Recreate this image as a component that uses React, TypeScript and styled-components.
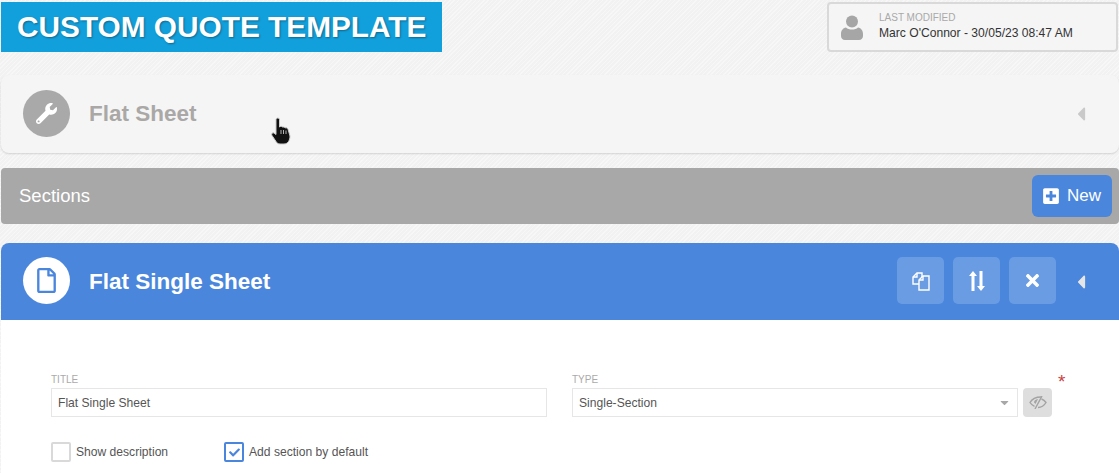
import React from "react";
import styled, { createGlobalStyle } from "styled-components";
import { FaCaretDown, FaCaretLeft, FaCheck, FaPlusSquare, FaRegFile, FaTimes, FaWrench } from "react-icons/fa";

const GlobalStyle = createGlobalStyle`
  html, body {
    margin: 0;
    padding: 0;
    height: 100%;
    overflow: hidden;
  }
  body {
    font-family: "Liberation Sans", Arial, sans-serif;
    background-color: #f4f4f4;
    background-image: repeating-linear-gradient(135deg, #f7f7f7 0 1px, #f2f2f2 1px 3px);
  }
`;

const Page = styled.div`
  position: relative;
  width: 1119px;
  height: 473px;
  overflow: hidden;
`;

const TopRow = styled.header`
  display: flex;
  justify-content: space-between;
  padding: 2px 1px 0 1px;
  height: 50px;
  margin-bottom: 23px;
`;

const Banner = styled.h1`
  margin: 0;
  width: 441px;
  height: 50px;
  box-sizing: border-box;
  background: #11a0dc;
  color: #fff;
  font-size: 29.8px;
  line-height: 49px;
  font-weight: 700;
  white-space: nowrap;
  padding-left: 16px;
  text-shadow: 1px 1px 2px rgba(0, 0, 0, 0.35);
`;

const ModifiedCard = styled.div`
  display: flex;
  align-items: center;
  width: 291px;
  height: 50px;
  box-sizing: border-box;
  border: 2px solid #d9d9d9;
  border-radius: 4px;
  background: #f5f5f5;
  padding-left: 12px;
`;

const ModifiedIcon = styled.svg`
  margin-right: 16px;
`;

const ModifiedLabel = styled.div`
  font-size: 10px;
  line-height: 12px;
  color: #a9a9a9;
`;

const ModifiedValue = styled.div`
  font-size: 12.1px;
  line-height: 17px;
  color: #333;
  margin-top: 1px;
`;

const Panel = styled.section<{ $blue?: boolean }>`
  display: flex;
  align-items: center;
  height: ${(p) => (p.$blue ? 77 : 78)}px;
  margin: 0 0 ${(p) => (p.$blue ? 0 : 15)}px 1px;
  box-sizing: border-box;
  padding: 0 27px 0 22px;
  background: ${(p) => (p.$blue ? "#4a86dc" : "#f5f5f5")};
  border-radius: ${(p) => (p.$blue ? "8px 8px 0 0" : "8px")};
  box-shadow: ${(p) => (p.$blue ? "none" : "0 1px 2px rgba(0,0,0,.14)")};
`;

const Disc = styled.div<{ $blue?: boolean }>`
  display: flex;
  align-items: center;
  justify-content: center;
  width: 47px;
  height: 47px;
  margin-top: -2px;
  border-radius: 50%;
  font-size: ${(p) => (p.$blue ? 25 : 21)}px;
  background: ${(p) => (p.$blue ? "#fff" : "#a9a9a9")};
  color: ${(p) => (p.$blue ? "#4a86dc" : "#fff")};
`;

const PanelTitle = styled.h2<{ $blue?: boolean }>`
  flex: 1;
  margin: 0 0 0 19px;
  font-size: 22.5px;
  font-weight: 700;
  color: ${(p) => (p.$blue ? "#fff" : "#aaa8a6")};
`;

const Caret = styled.div<{ $blue?: boolean }>`
  display: flex;
  font-size: 22px;
  margin-left: 14px;
  color: ${(p) => (p.$blue ? "#e6e6e6" : "#c9c9c9")};
`;

const SectionsBar = styled.div`
  display: flex;
  align-items: center;
  justify-content: space-between;
  height: 56px;
  margin: 0 0 19px 1px;
  box-sizing: border-box;
  padding: 0 7px 0 18px;
  background: #a8a8a8;
  border-radius: 4px;
  color: #fff;
  font-size: 18.5px;
`;

const NewButton = styled.button`
  display: flex;
  align-items: center;
  gap: 7px;
  width: 80px;
  height: 42px;
  padding: 0 0 0 10px;
  border: none;
  border-radius: 6px;
  background: #4a86dc;
  color: #fff;
  font-family: inherit;
  font-size: 17px;
  svg {
    font-size: 18px;
  }
`;

const ActionGroup = styled.div`
  display: flex;
  gap: 9px;
  margin-top: -2px;
`;

const ActionButton = styled.button`
  display: flex;
  align-items: center;
  justify-content: center;
  width: 47px;
  height: 47px;
  padding: 0;
  border: none;
  border-radius: 5px;
  background: #6a9ce4;
  color: #fff;
  font-size: 19px;
`;

const FormPanel = styled.div`
  margin-left: 1px;
  height: 153px;
  box-sizing: border-box;
  padding: 54px 0 0 50px;
  background: #fff;
`;

const FieldRow = styled.div`
  display: flex;
  align-items: flex-end;
`;

const Field = styled.label<{ $width: number }>`
  display: block;
  width: ${(p) => p.$width}px;
  margin-right: 25px;
`;

const FieldLabel = styled.div`
  font-size: 10px;
  line-height: 11px;
  margin-bottom: 3px;
  color: #aaa;
`;

const TextInput = styled.div`
  display: flex;
  align-items: center;
  justify-content: space-between;
  height: 29px;
  box-sizing: border-box;
  padding: 0 6px;
  border: 1px solid #e6e6e6;
  font-size: 12.1px;
  color: #555;
  background: #fff;
  svg {
    color: #a8a8a8;
    font-size: 13px;
  }
`;

const EyeButton = styled.button`
  display: flex;
  align-items: center;
  justify-content: center;
  width: 29px;
  height: 29px;
  margin-left: -20px;
  padding: 0;
  border: none;
  border-radius: 4px;
  background: #dedede;
`;

const Required = styled.span`
  align-self: flex-start;
  margin: 2px 0 0 6px;
  color: #c9413f;
  font-size: 19px;
  line-height: 12px;
`;

const CheckRow = styled.div`
  display: flex;
  margin-top: 25px;
`;

const CheckItem = styled.div<{ $width: number }>`
  display: flex;
  align-items: center;
  gap: 5px;
  width: ${(p) => p.$width}px;
  font-size: 12.1px;
  color: #555;
`;

const CheckBox = styled.span<{ $on?: boolean }>`
  display: flex;
  align-items: center;
  justify-content: center;
  width: 20px;
  height: 20px;
  box-sizing: border-box;
  border: 2.500px solid ${(p) => (p.$on ? "#4a86dc" : "#d9d9d9")};
  border-radius: 2px;
  color: #4a86dc;
  font-size: 11px;
`;

const Cursor = styled.svg`
  position: absolute;
  left: 271px;
  top: 117px;
`;

function UserIcon() {
  return (
    <ModifiedIcon width="22" height="25" viewBox="0 0 22 25" fill="#a6a6a6">
      <circle cx="11" cy="6.500" r="6" />
      <path d="M5 12.500c1.500 1.500 3.500 2 6 2s4.500-.500 6-2c3 .500 5 3 5 6.500v2c0 2-1.500 4-4 4H4c-2.500 0-4-2-4-4v-2c0-3.500 2-6 5-6.500z" />
    </ModifiedIcon>
  );
}

function CopyIcon() {
  return (
    <svg width="20" height="20" viewBox="0 0 20 20" fill="none" stroke="#fff" strokeWidth="1.4">
      <path d="M8 13H2V6l4-4h5v4" />
      <path d="M6 2v4H2" />
      <path d="M8 9l4-4h6v14H8z" />
      <path d="M12 5v4H8" />
    </svg>
  );
}

function SortIcon() {
  return (
    <svg width="16" height="20" viewBox="0 0 16 20" fill="#fff">
      <path d="M4 0l4 5H5.500v15h-3V5H0z" />
      <path d="M12 20l4-5h-2.500V0h-3v15H8z" />
    </svg>
  );
}

function EyeOffIcon() {
  return (
    <svg width="18" height="13" viewBox="0 0 18 13" fill="none" stroke="#a3a3a3" strokeWidth="1.4">
      <path d="M12 1C7 1 3 3 1 6.500c1 1.600 2.500 3 4.500 3.800" />
      <path d="M12.500 3C14.800 3.700 16 5 17 6.500c-1.800 3-4.500 5-8 5" />
      <path d="M13 0L6 13" />
      <path d="M5 6.500c0-2 1.500-3 4-3.500L6.500 8z" fill="#a3a3a3" stroke="none" />
    </svg>
  );
}

export default function App() {
  return (
    <Page>
      <GlobalStyle />
      <TopRow>
        <Banner>CUSTOM QUOTE TEMPLATE</Banner>
        <ModifiedCard>
          <UserIcon />
          <div>
            <ModifiedLabel>LAST MODIFIED</ModifiedLabel>
            <ModifiedValue>Marc O'Connor - 30/05/23 08:47 AM</ModifiedValue>
          </div>
        </ModifiedCard>
      </TopRow>

      <Panel>
        <Disc>
          <FaWrench />
        </Disc>
        <PanelTitle>Flat Sheet</PanelTitle>
        <Caret>
          <FaCaretLeft />
        </Caret>
      </Panel>

      <SectionsBar>
        Sections
        <NewButton>
          <FaPlusSquare />
          New
        </NewButton>
      </SectionsBar>

      <Panel $blue>
        <Disc $blue>
          <FaRegFile />
        </Disc>
        <PanelTitle $blue>Flat Single Sheet</PanelTitle>
        <ActionGroup>
          <ActionButton>
            <CopyIcon />
          </ActionButton>
          <ActionButton>
            <SortIcon />
          </ActionButton>
          <ActionButton>
            <FaTimes />
          </ActionButton>
        </ActionGroup>
        <Caret $blue>
          <FaCaretLeft />
        </Caret>
      </Panel>

      <FormPanel>
        <FieldRow>
          <Field $width={496}>
            <FieldLabel>TITLE</FieldLabel>
            <TextInput>Flat Single Sheet</TextInput>
          </Field>
          <Field $width={446}>
            <FieldLabel>TYPE</FieldLabel>
            <TextInput>
              Single-Section
              <FaCaretDown />
            </TextInput>
          </Field>
          <EyeButton>
            <EyeOffIcon />
          </EyeButton>
          <Required>*</Required>
        </FieldRow>
        <CheckRow>
          <CheckItem $width={173}>
            <CheckBox />
            Show description
          </CheckItem>
          <CheckItem $width={200}>
            <CheckBox $on>
              <FaCheck />
            </CheckBox>
            Add section by default
          </CheckItem>
        </CheckRow>
      </FormPanel>

      <Cursor width="20" height="28" viewBox="0 0 20 28">
        <path
          d="M5 2c1-1.500 3-1.500 3.500.500V10l1-.500c1-.300 2 0 2.200.700 1-.500 2 0 2.300.800 1-.500 2.500 0 3 1.200L19 19c0 4-2 8-6 8H9c-2 0-3-1-4-2.500L1 18.500c-1-1.500.500-3.500 2-2.500l2 1.500V3z"
          fill="#111"
          stroke="#ccc"
          strokeWidth="1"
        />
        <path d="M10 13v4M12.500 13v4M15 13.500V17" stroke="#ddd" strokeWidth=".8" />
      </Cursor>
    </Page>
  );
}
